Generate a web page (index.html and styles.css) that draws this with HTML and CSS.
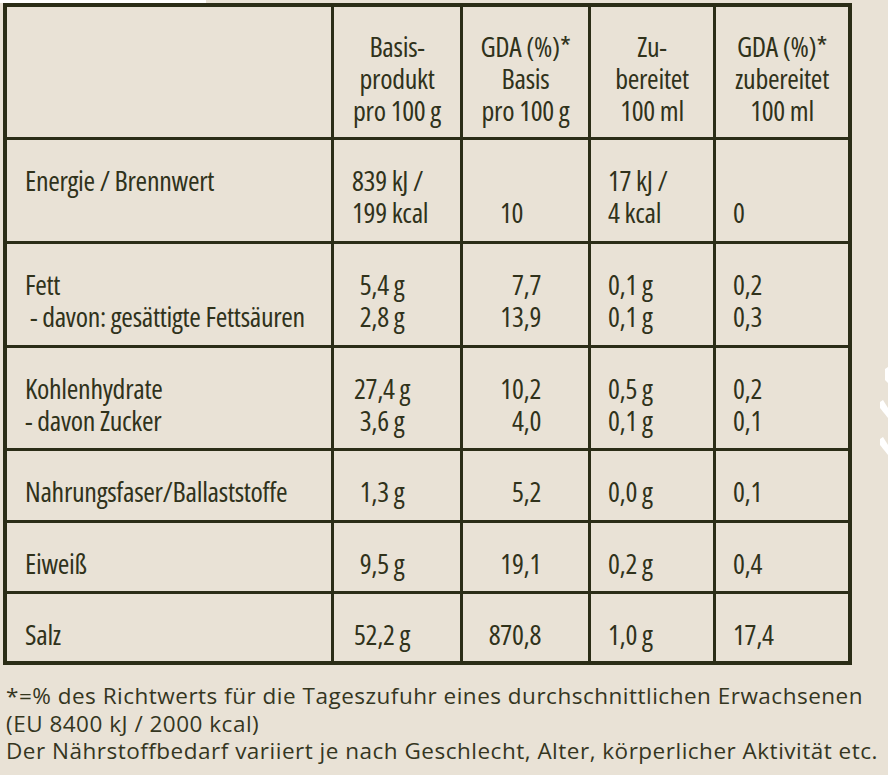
FILE: index.html
```html
<!DOCTYPE html>
<html lang="de">
<head>
<meta charset="utf-8">
<title>Nährwerte</title>
<link rel="stylesheet" href="styles.css">
</head>
<body>
<div class="page">
  <div class="strip"></div>
  <div class="grid">
    <div class="cell c1"></div>
    <div class="cell head">Basis-<br>produkt<br>pro 100 g</div>
    <div class="cell head">GDA (%)*<br>Basis<br>pro 100 g</div>
    <div class="cell head">Zu-<br>bereitet<br>100 ml</div>
    <div class="cell head">GDA (%)*<br>zubereitet<br>100 ml</div>

    <div class="cell c1">Energie / Brennwert</div>
    <div class="cell c2l">839 kJ /<br>199 kcal</div>
    <div class="cell c3l"><br>10</div>
    <div class="cell c4">17 kJ /<br>4 kcal</div>
    <div class="cell c5"><br>0</div>

    <div class="cell c1">Fett<br> - davon: gesättigte Fettsäuren</div>
    <div class="cell c2">5,4 g<br>2,8 g</div>
    <div class="cell c3">7,7<br>13,9</div>
    <div class="cell c4">0,1 g<br>0,1 g</div>
    <div class="cell c5">0,2<br>0,3</div>

    <div class="cell c1">Kohlenhydrate<br>- davon Zucker</div>
    <div class="cell c2">27,4 g<br>3,6 g</div>
    <div class="cell c3">10,2<br>4,0</div>
    <div class="cell c4">0,5 g<br>0,1 g</div>
    <div class="cell c5">0,2<br>0,1</div>

    <div class="cell c1">Nahrungsfaser/Ballaststoffe</div>
    <div class="cell c2">1,3 g</div>
    <div class="cell c3">5,2</div>
    <div class="cell c4">0,0 g</div>
    <div class="cell c5">0,1</div>

    <div class="cell c1">Eiweiß</div>
    <div class="cell c2">9,5 g</div>
    <div class="cell c3">19,1</div>
    <div class="cell c4">0,2 g</div>
    <div class="cell c5">0,4</div>

    <div class="cell c1">Salz</div>
    <div class="cell c2">52,2 g</div>
    <div class="cell c3">870,8</div>
    <div class="cell c4">1,0 g</div>
    <div class="cell c5">17,4</div>
  </div>
  <p class="note">*=% des Richtwerts für die Tageszufuhr eines durchschnittlichen Erwachsenen<br>(EU 8400 kJ / 2000 kcal)<br>Der Nährstoffbedarf variiert je nach Geschlecht, Alter, körperlicher Aktivität etc.</p>
  <svg class="deco" width="12" height="100" viewBox="0 0 12 100" aria-hidden="true">
    <polygon points="9,7 12,5 12,21 9,18" fill="#ffffff"/>
    <polygon points="4,40 7,38 12,46 12,56 4,46" fill="#ffffff"/>
    <polygon points="4,77 7,75 12,83 12,93 4,83" fill="#ffffff"/>
  </svg>
</div>
</body>
</html>
```
FILE: styles.css
```css
html, body {
  margin: 0;
  padding: 0;
  background: #e9e2d6;
}
body {
  width: 888px;
  height: 775px;
  overflow: hidden;
}
.page {
  position: relative;
  width: 888px;
  height: 775px;
  color: #30321b;
}
.strip {
  width: 206px;
  height: 3px;
  background: #ffffff;
}
.grid {
  display: grid;
  grid-template-columns: 324px 126px 125px 122px 132px;
  grid-template-rows: 130px 101px 101px 100px 69px 68px 67px;
  gap: 3px;
  padding: 4px;
  margin-left: 3px;
  width: max-content;
  background: #2b2d17;
}
.cell {
  background: #e9e2d6;
  font-family: "Open Sans", "Noto Sans", sans-serif;
  font-stretch: 75%;
  font-size: 28px;
  line-height: 32px;
  letter-spacing: -0.3px;
  padding-top: 24px;
  white-space: pre;
  box-sizing: border-box;
}
.head {
  text-align: center;
  padding-top: 23px;
}
.c1 { padding-left: 18px; }
.c2 { text-align: center; padding-right: 30px; }
.c2l { padding-left: 18px; }
.c3 { text-align: right; padding-right: 47px; }
.c3l { padding-left: 37px; }
.c4 { padding-left: 17px; }
.c5 { padding-left: 17px; }
.note {
  margin: 17px 0 0 6px;
  font-family: "Open Sans", "Noto Sans", sans-serif;
  font-size: 22.5px;
  line-height: 27.5px;
  letter-spacing: 0.5px;
  white-space: nowrap;
  color: #35361f;
}
.deco {
  position: absolute;
  right: 0;
  top: 362px;
}
```
